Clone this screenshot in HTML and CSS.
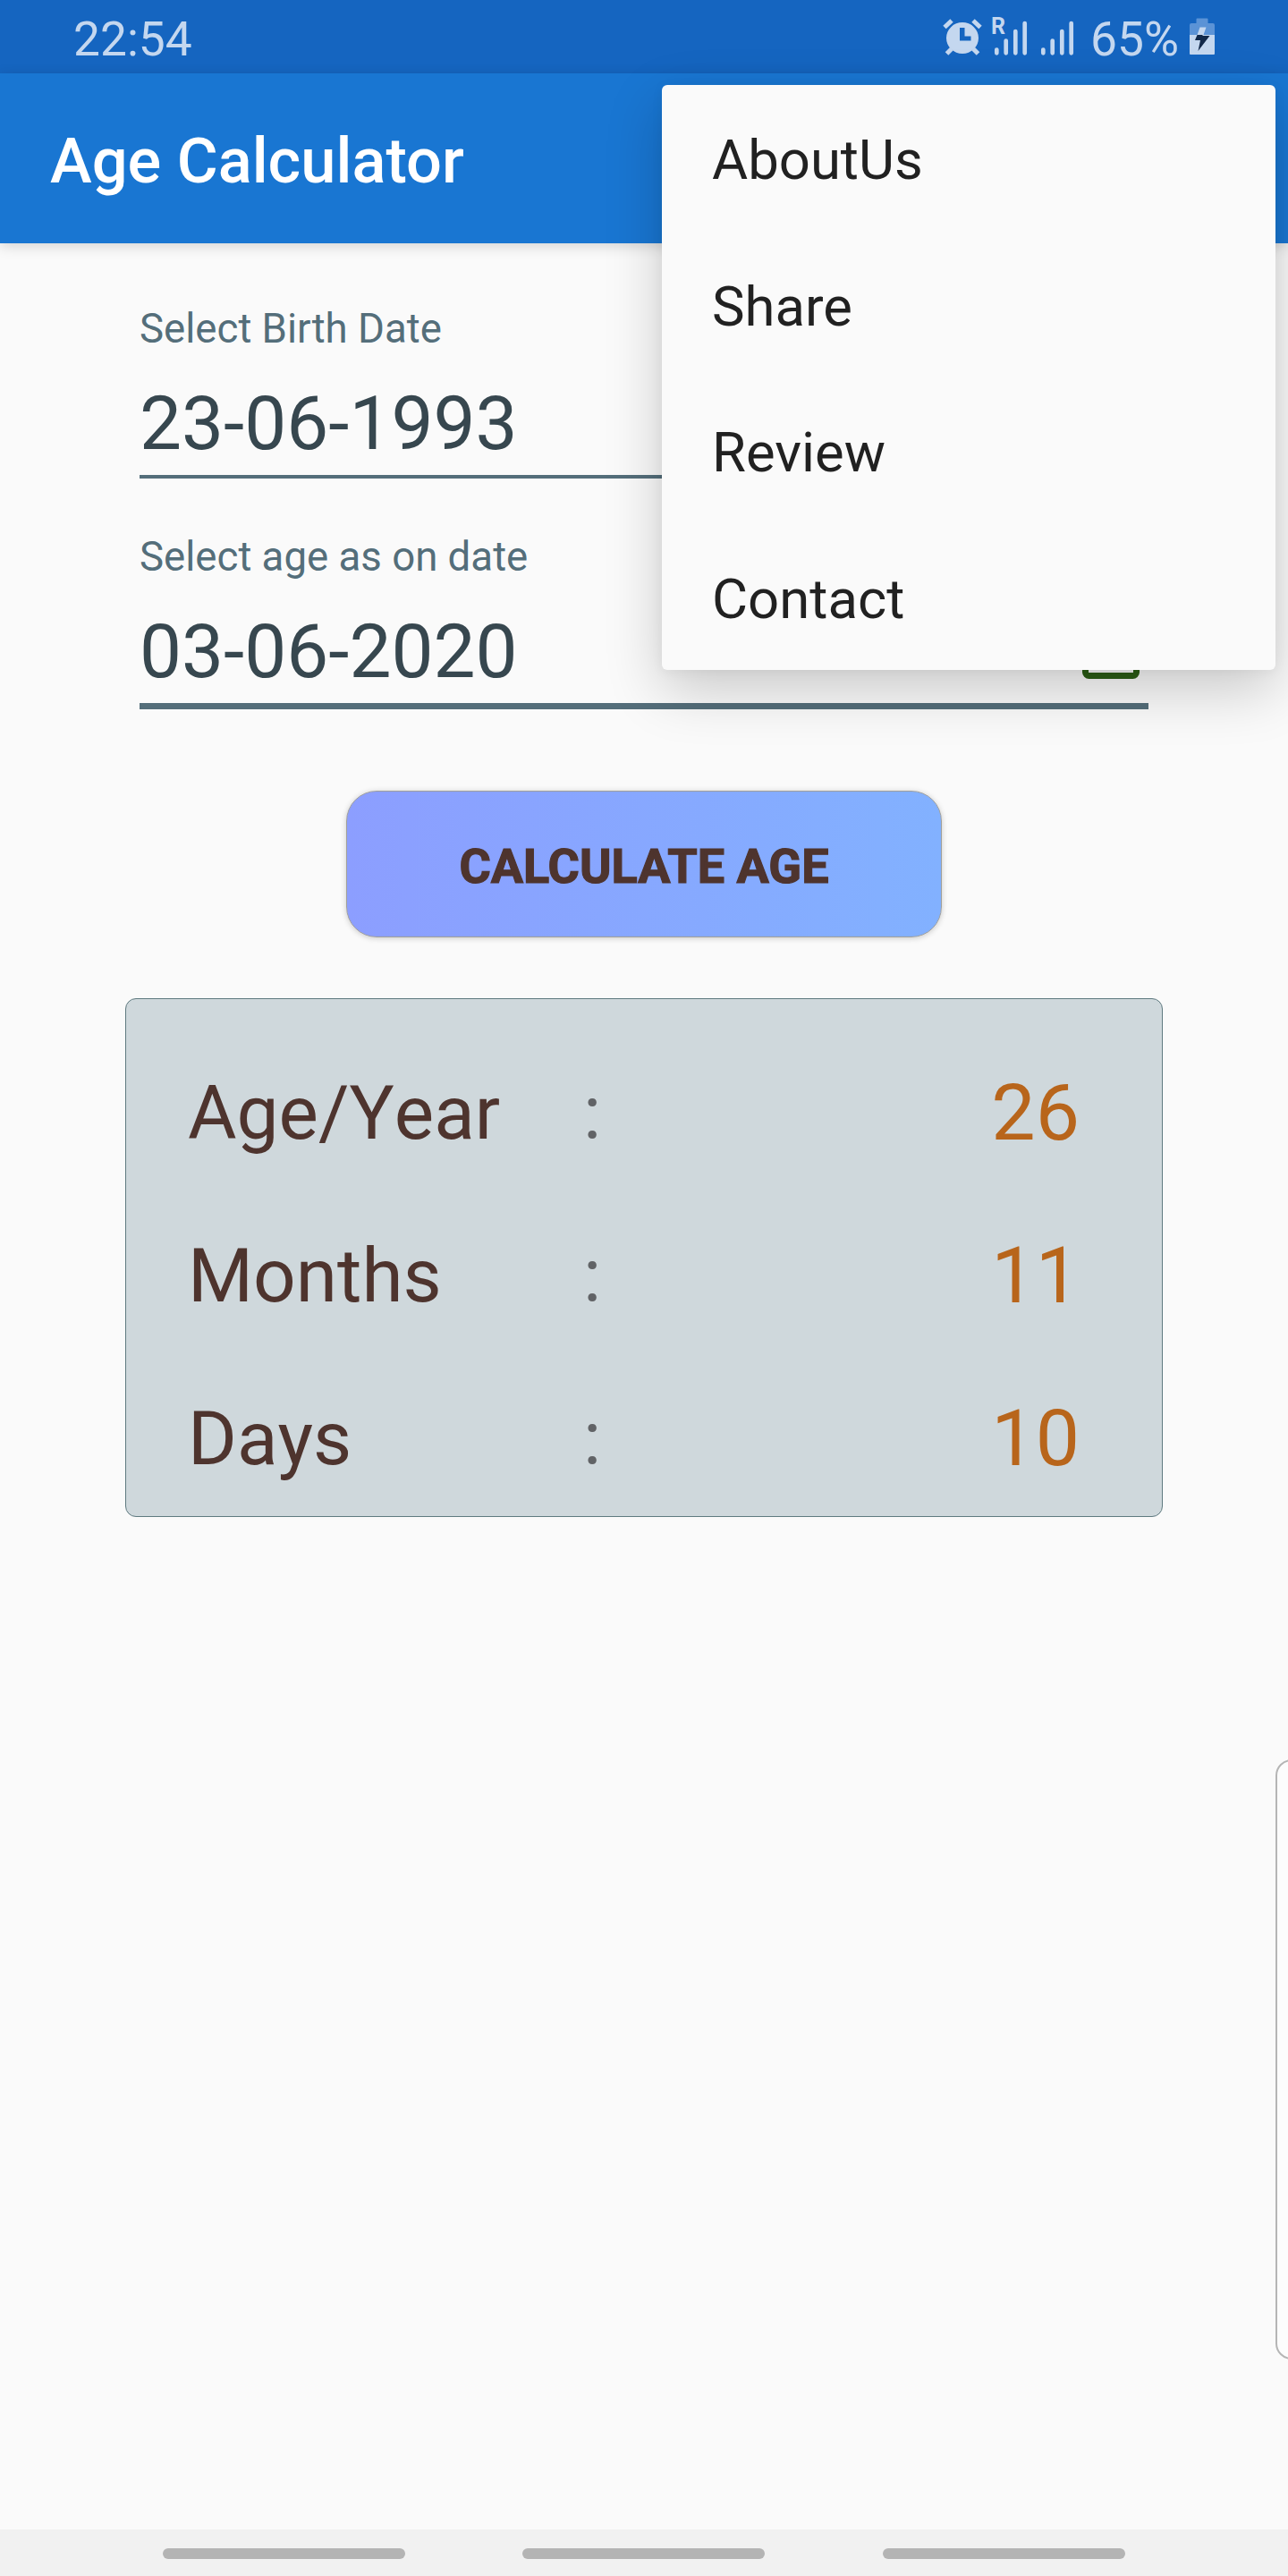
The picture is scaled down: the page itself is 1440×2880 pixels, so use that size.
FILE: index.html
```
<!DOCTYPE html>
<html lang="en">
<head>
<meta charset="utf-8">
<title>Age Calculator</title>
<link rel="stylesheet" href="styles.css">
</head>
<body>
<div class="screen">
  <header class="status">
    <span class="status-text">22:54</span>
    <div class="status-icons">
      <svg class="alarm" width="46" height="42" viewBox="0 0 46 42">
        <path d="M3 10.500 11 3M35 3 43 10.500" stroke="currentColor" stroke-width="5"/>
        <path d="M11 34.500 5.500 40M35 34.500 40.500 40" stroke="currentColor" stroke-width="5"/>
        <path fill="currentColor" fill-rule="evenodd" d="M23 5a18 17.500 0 1 0 0 35a18 17.500 0 1 0 0-35zM20 11h5.500v9.500h7v5H20z"/>
      </svg>
      <div class="signal roaming">
        <span class="roam">R</span>
        <svg width="38" height="42" viewBox="0 0 38 42" stroke="currentColor" stroke-width="4.700" stroke-linecap="round"><path d="M3.300 35.500V39.300M13.700 25.500V39.300M24.300 15V39.300M34.700 6V39.300"/></svg>
      </div>
      <svg class="signal" width="38" height="42" viewBox="0 0 38 42" stroke="currentColor" stroke-width="4.700" stroke-linecap="round"><path d="M3.300 35.500V39.300M13.700 25.500V39.300M24.300 15V39.300M34.700 6V39.300"/></svg>
      <span class="status-text percent">65%</span>
      <svg class="battery" width="28" height="42" viewBox="0 0 28 42">
        <path fill="#5b93d6" d="M7.500 1.500q0-1 1-1H19.500q1 0 1 1V6H26q2 0 2 2V19H0V8q0-2 2-2H7.500z"/>
        <path fill="currentColor" d="M0 19H28V40q0 1-1 1H1q-1 0-1-1z"/>
        <path fill="currentColor" d="M11.500 10.500H18.500L15.500 19H8.500z"/>
        <path fill="#12294a" d="M8.500 19H15L14 20H22.500L9.500 37 12 25H6z"/>
      </svg>
    </div>
  </header>

  <div class="appbar"><h1>Age Calculator</h1></div>

  <main class="content">
    <div class="field">
      <span class="label">Select Birth Date</span>
      <div class="value">23-06-1993</div>
    </div>
    <div class="field focused">
      <span class="label">Select age as on date</span>
      <div class="value">03-06-2020
        <svg class="calendar" width="64" height="72" viewBox="0 0 64 72" fill="none" stroke="#2c5f16" stroke-width="7"><rect x="3.500" y="10" width="57" height="58.500" rx="4"/><path d="M3 22H61M17 0V12M47 0V12"/></svg>
      </div>
    </div>
    <button class="calculate" type="button">CALCULATE AGE</button>
    <section class="result">
      <div class="row"><span>Age/Year</span><span class="colon">:</span><span class="number">26</span></div>
      <div class="row"><span>Months</span><span class="colon">:</span><span class="number">11</span></div>
      <div class="row"><span>Days</span><span class="colon">:</span><span class="number">10</span></div>
    </section>
  </main>

  <nav class="navbar"><i class="pill"></i><i class="pill"></i><i class="pill"></i></nav>

  <div class="menu">
    <div class="item">AboutUs</div>
    <div class="item">Share</div>
    <div class="item">Review</div>
    <div class="item">Contact</div>
  </div>
  <div class="edge-handle"></div>
</div>
</body>
</html>
```
FILE: styles.css
```
* { box-sizing: border-box; }
body { margin: 0; font-family: Roboto, sans-serif; }
.screen {
  position: relative;
  display: flex;
  flex-direction: column;
  width: 1440px;
  height: 2880px;
  overflow: hidden;
  background: #fafafa;
}

.status {
  display: flex;
  justify-content: space-between;
  height: 82px;
  padding: 20px 82px 0 82px;
  background: #1565c0;
  color: #c4d7ef;
}
.status-text { font-size: 53.3px; line-height: 48px; }
.status-icons { display: flex; align-items: flex-start; }
.signal.roaming { position: relative; display: flex; margin: 0 14px 0 12px; }
.roam {
  position: absolute;
  left: -3px;
  top: 1px;
  font: 700 25px/18px Roboto, sans-serif;
}
.percent { margin-left: 18px; }
.battery { margin-left: 12px; }

.appbar {
  display: flex;
  align-items: center;
  height: 190px;
  padding: 5px 56px 0;
  background: #1976d2;
  box-shadow: 0 3px 14px rgba(0, 0, 0, .16);
}
h1 { margin: 0; font-size: 70.4px; font-weight: 500; color: #fff; }

.content {
  flex: 1;
  display: flex;
  flex-direction: column;
  align-items: center;
  padding-top: 66px;
}
.field { width: 1128px; height: 255px; color: #546e7a; }
.label { display: block; padding-top: 2px; font-size: 45.6px; line-height: 56px; }
.value {
  display: flex;
  justify-content: space-between;
  height: 139px;
  padding: 28px 10px 0 0;
  border-bottom: 4px solid #546e7a;
  color: #37474f;
  font-size: 83.7px;
  line-height: 99px;
}
.focused .value { height: 142px; border-bottom-width: 7px; }
.calendar { margin-top: 8px; }

.calculate {
  width: 666px;
  height: 164px;
  margin-top: 36px;
  padding: 6px 0 0;
  border: 1px solid #a1a09a;
  border-radius: 34px;
  background: linear-gradient(90deg, #8c9eff, #82b1ff);
  box-shadow: 0 1px 6px rgba(0, 0, 0, .2);
  color: #4e342e;
  font: 700 54px/64px Roboto, sans-serif;
  -webkit-text-stroke: 1.2px #4e342e;
}
.result {
  width: 1160px;
  height: 580px;
  margin-top: 68px;
  padding: 36px 92px 0 69px;
  border: 1px solid #5f7a80;
  border-radius: 12px;
  background: #cfd8dc;
  color: #4e342e;
}
.row {
  display: grid;
  grid-template-columns: 442px 60px 1fr;
  height: 182px;
  font-size: 83.7px;
  font-kerning: none;
  line-height: 183px;
}
.colon { color: #616366; }
.number { font-size: 87.75px; color: #b8651b; text-align: right; }

.navbar {
  display: flex;
  justify-content: center;
  align-items: center;
  gap: 131.5px;
  height: 52px;
  padding: 2px 1px 0 0;
  background: #f1f1f1;
}
.pill { width: 271px; height: 12px; border-radius: 6px; background: #b4b4b4; }

.menu {
  position: absolute;
  left: 740px;
  top: 95px;
  width: 686px;
  height: 654px;
  border-radius: 6px;
  background: #fafafa;
  box-shadow: 0 22px 64px rgba(0, 0, 0, .2), 0 2px 14px rgba(0, 0, 0, .05);
}
.item {
  height: 163.5px;
  padding: 5px 56px 0;
  color: #212121;
  font-size: 61.6px;
  line-height: 158.500px;
}
.edge-handle {
  position: absolute;
  left: 1426px;
  top: 1967px;
  width: 40px;
  height: 671px;
  border: 2px solid #b5b5b5;
  border-radius: 18px;
  background: #fcfcfc;
}
```
